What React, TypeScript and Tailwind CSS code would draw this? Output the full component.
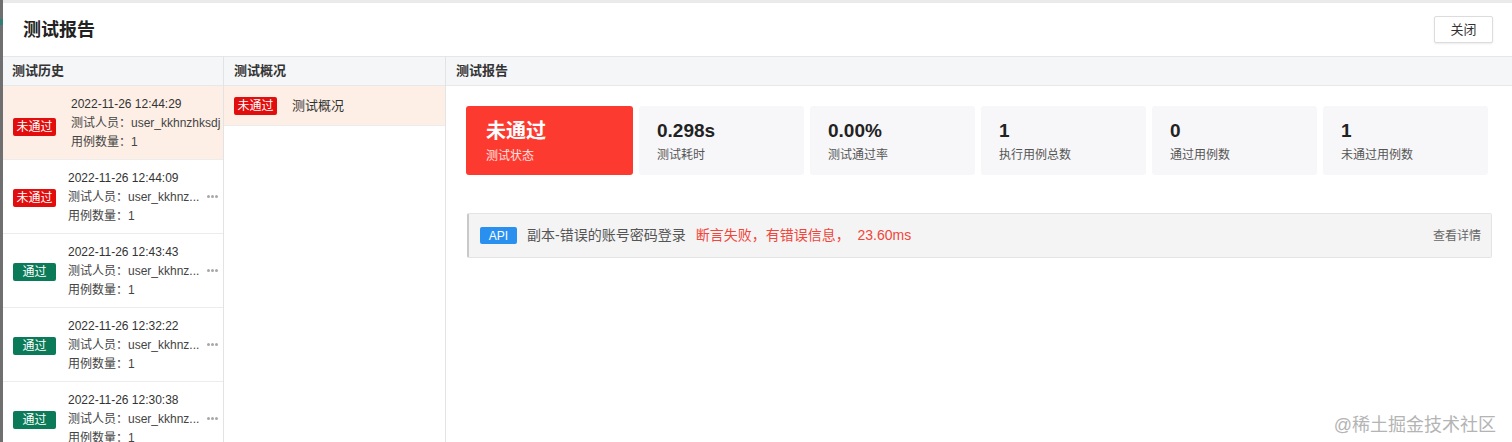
const font = { fontFamily: '"Liberation Sans", "Noto Sans CJK SC", sans-serif' };

type Hist = { time: string; passed: boolean; active?: boolean; full?: boolean };

const history: Hist[] = [
  { time: "2022-11-26 12:44:29", passed: false, active: true, full: true },
  { time: "2022-11-26 12:44:09", passed: false },
  { time: "2022-11-26 12:43:43", passed: true },
  { time: "2022-11-26 12:32:22", passed: true },
  { time: "2022-11-26 12:30:38", passed: true },
];

const stats = [
  { value: "0.298s", label: "测试耗时" },
  { value: "0.00%", label: "测试通过率" },
  { value: "1", label: "执行用例总数" },
  { value: "0", label: "通过用例数" },
  { value: "1", label: "未通过用例数" },
];

function Badge({ passed }: { passed: boolean }) {
  return passed ? (
    <span className="inline-flex h-[18px] w-[43px] items-center justify-center rounded-[2px] bg-[#0b7a58] text-[12px] text-white">
      通过
    </span>
  ) : (
    <span className="inline-flex h-[18px] w-[43px] items-center justify-center rounded-[2px] bg-[#e20e0e] text-[12px] text-white">
      未通过
    </span>
  );
}

function Dots() {
  return (
    <span className="ml-[8px] flex items-center gap-[1px]">
      <span className="h-[3px] w-[3px] rounded-full bg-[#a8a8a8]" />
      <span className="h-[3px] w-[3px] rounded-full bg-[#a8a8a8]" />
      <span className="h-[3px] w-[3px] rounded-full bg-[#a8a8a8]" />
    </span>
  );
}

function HistoryRow({ item }: { item: Hist }) {
  return (
    <div
      className={`flex h-[74px] items-center border-b border-[#ececec] pl-[10px] ${
        item.active ? "bg-[#fdefe6]" : "bg-white"
      }`}
    >
      <div className={item.full ? "mt-[6px] shrink-0" : "shrink-0"}>
        <Badge passed={item.passed} />
      </div>
      <div
        className={`flex flex-col gap-[3px] text-[12px] leading-[16px] text-[#444] ${
          item.full ? "ml-[15px]" : "ml-[12px]"
        }`}
      >
        <div className="text-[#333]">{item.time}</div>
        {item.full ? (
          <div>测试人员：user_kkhnzhksdj</div>
        ) : (
          <div className="flex items-center">
            <span>测试人员：user_kkhnz...</span>
            <Dots />
          </div>
        )}
        <div>用例数量：1</div>
      </div>
    </div>
  );
}

export default function App() {
  return (
    <div className="flex h-[442px] w-[1512px] overflow-hidden bg-[#eaeaea]" style={font}>
      {/* overlay strip */}
      <div className="flex w-[3px] shrink-0 flex-col bg-[#6f6f6f]">
        <div className="mt-[19px] h-[6px] bg-[#2f7f74]" />
      </div>

      <div className="mt-[3px] flex flex-1 flex-col bg-white">
        {/* Header */}
        <div className="flex h-[54px] shrink-0 items-center justify-between border-b border-[#e6e6e6] pl-[20px] pr-[19px]">
          <div className="mt-[2px] text-[18px] font-bold text-[#222]">测试报告</div>
          <button className="h-[27px] w-[59px] rounded-[2px] border border-[#dcdcdc] bg-white text-[13px] text-[#333] shadow-[0_1px_2px_rgba(0,0,0,0.08)]">
            关闭
          </button>
        </div>

        <div className="flex flex-1">
          {/* History */}
          <div className="flex w-[221px] shrink-0 flex-col border-r border-[#e3e3e3]">
            <div className="flex h-[29px] shrink-0 items-center border-b border-[#e8e8e8] bg-[#f5f6f8] pl-[9px] text-[13px] font-bold text-[#333]">
              测试历史
            </div>
            {history.map((h, i) => (
              <HistoryRow key={i} item={h} />
            ))}
          </div>

          {/* Overview */}
          <div className="flex w-[222px] shrink-0 flex-col border-r border-[#e3e3e3]">
            <div className="flex h-[29px] items-center border-b border-[#e8e8e8] bg-[#f5f6f8] pl-[10px] text-[13px] font-bold text-[#333]">
              测试概况
            </div>
            <div className="flex h-[40px] items-center border-b border-[#ececec] bg-[#fdefe6] pl-[10px]">
              <Badge passed={false} />
              <span className="ml-[15px] text-[13px] text-[#333]">测试概况</span>
            </div>
          </div>

          {/* Report */}
          <div className="relative flex flex-1 flex-col">
            <div className="flex h-[29px] items-center border-b border-[#e8e8e8] bg-[#f5f6f8] pl-[10px] text-[13px] font-bold text-[#333]">
              测试报告
            </div>
            <div className="flex gap-[6px] pl-[20px] pr-[24px] pt-[20px]">
              <div className="flex h-[69px] w-[167px] shrink-0 flex-col justify-center rounded-[3px] bg-[#fd3a30] pl-[20px] text-white">
                <div className="text-[20px] font-bold leading-[26px]">未通过</div>
                <div className="mt-[4px] text-[12px] leading-[16px] text-[#ffe3e0]">测试状态</div>
              </div>
              {stats.map((s) => (
                <div
                  key={s.label}
                  className="flex h-[69px] flex-1 flex-col justify-center rounded-[3px] bg-[#f7f7f9] pl-[18px]"
                >
                  <div className="text-[19px] font-bold leading-[26px] text-[#222]">{s.value}</div>
                  <div className="mt-[3px] text-[12px] leading-[16px] text-[#555]">{s.label}</div>
                </div>
              ))}
            </div>

            <div className="ml-[21px] mr-[20px] mt-[38px] flex h-[45px] items-center rounded-[2px] border border-l-2 border-[#e4e4e4] border-l-[#c9c9c9] bg-[#f4f4f4] pl-[11px] pr-[10px]">
              <span className="inline-flex h-[17px] w-[37px] items-center justify-center rounded-[2px] bg-[#2a90ef] text-[12px] text-white">
                API
              </span>
              <span className="ml-[10px] text-[14px] text-[#555]">副本-错误的账号密码登录</span>
              <span className="ml-[10px] text-[14px] text-[#f2453b]">断言失败，有错误信息，&nbsp;&nbsp;23.60ms</span>
              <span className="ml-auto text-[12px] text-[#666]">查看详情</span>
            </div>

            <div className="absolute bottom-[17px] right-[16px] text-[18px] text-[#b4b4b4]">@稀土掘金技术社区</div>
          </div>
        </div>
      </div>
    </div>
  );
}
